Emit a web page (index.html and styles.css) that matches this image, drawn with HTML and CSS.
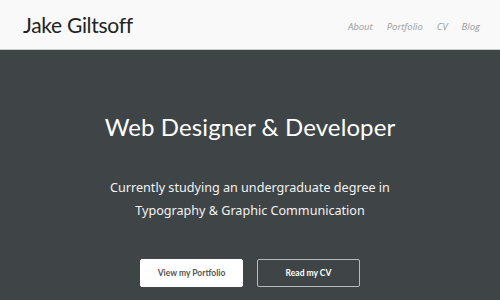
FILE: index.html
```html
<!DOCTYPE html>
<html lang="en">
  <head>
    <meta charset="UTF-8" />
    <title>Jake Giltsoff</title>
    <link rel="stylesheet" href="styles.css">
  </head>
  <body>
    <header class="header">
      <div class="logo">Jake Giltsoff</div>
      <nav class="nav">
        <a href="#">About</a>
        <a href="#">Portfolio</a>
        <a href="#">CV</a>
        <a href="#">Blog</a>
      </nav>
    </header>

    <section class="hero">
      <h1>Web Designer &amp; Developer</h1>
      <p class="intro">
        Currently studying an undergraduate degree in<br />
        Typography &amp; Graphic Communication
      </p>
      <div class="actions">
        <a href="#" class="btn btn-light">View my Portfolio</a>
        <a href="#" class="btn btn-outline">Read my CV</a>
      </div>
    </section>
  </body>
</html>
```

FILE: styles.css
```css
* {
  box-sizing: border-box;
  margin: 0;
  padding: 0;
}

body {
  font-family: "Lato", sans-serif;
  background: #3f4547;
  height: 300px;
  overflow: hidden;
}

.header {
  height: 50px;
  background: #f9f9f9;
  border-bottom: 1px solid #c9cbcb;
  display: flex;
  align-items: center;
  justify-content: space-between;
  padding: 0 20px 0 23px;
}

.logo {
  font-size: 21px;
  color: #222;
  letter-spacing: -0.3px;
}

.nav {
  display: flex;
  gap: 14px;
  padding-top: 3px;
}

.nav a {
  font-family: "Open Sans", sans-serif;
  font-style: italic;
  font-size: 9.5px;
  color: #999;
  text-decoration: none;
}

.hero {
  display: flex;
  flex-direction: column;
  align-items: center;
  color: #fff;
  padding-top: 62px;
}

.hero h1 {
  font-weight: 400;
  font-size: 24px;
  letter-spacing: 0.1px;
}

.intro {
  font-family: "Noto Sans", sans-serif;
  font-size: 12.6px;
  line-height: 23px;
  text-align: center;
  color: #f2f2f2;
  margin-top: 35px;
}

.actions {
  display: flex;
  gap: 14px;
  margin-top: 37px;
}

.btn {
  width: 103px;
  height: 28px;
  display: flex;
  align-items: center;
  justify-content: center;
  font-size: 8.5px;
  font-weight: 700;
  text-decoration: none;
  border-radius: 2px;
}

.btn-light {
  background: #fff;
  color: #555;
  border: 1px solid #fff;
}

.btn-outline {
  color: #fff;
  border: 1px solid #b8bbbb;
}
```
